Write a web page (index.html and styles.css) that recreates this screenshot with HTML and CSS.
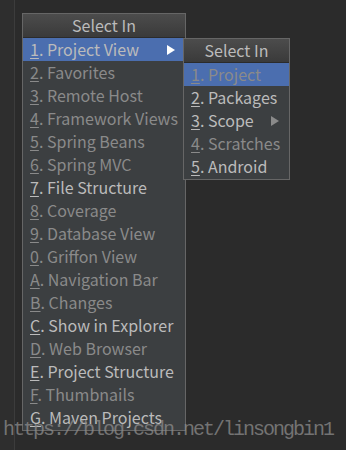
FILE: index.html
```html
<!DOCTYPE html>
<html lang="en">
<head>
    <meta charset="UTF-8">
    <meta name="viewport" content="width=device-width, initial-scale=1.0">
    <title>Select In</title>
    <link rel="stylesheet" href="styles.css">
</head>
<body>
    <div class="gutter"></div>
    <div class="editor">
        <div class="menu main-menu">
            <div class="menu-title">Select In</div>
            <ul class="menu-list">
                <li class="item active bright"><span><u>1</u>. Project View</span>
                    <svg class="arrow" width="8" height="10" viewBox="0 0 8 10"><polygon points="0,0 8,5 0,10" fill="#ffffff"/></svg>
                </li>
                <li class="item"><span><u>2</u>. Favorites</span></li>
                <li class="item"><span><u>3</u>. Remote Host</span></li>
                <li class="item"><span><u>4</u>. Framework Views</span></li>
                <li class="item"><span><u>5</u>. Spring Beans</span></li>
                <li class="item"><span><u>6</u>. Spring MVC</span></li>
                <li class="item bright"><span><u>7</u>. File Structure</span></li>
                <li class="item"><span><u>8</u>. Coverage</span></li>
                <li class="item"><span><u>9</u>. Database View</span></li>
                <li class="item"><span><u>0</u>. Griffon View</span></li>
                <li class="item"><span><u>A</u>. Navigation Bar</span></li>
                <li class="item"><span><u>B</u>. Changes</span></li>
                <li class="item bright"><span><u>C</u>. Show in Explorer</span></li>
                <li class="item"><span><u>D</u>. Web Browser</span></li>
                <li class="item bright"><span><u>E</u>. Project Structure</span></li>
                <li class="item"><span><u>F</u>. Thumbnails</span></li>
                <li class="item bright"><span><u>G</u>. Maven Projects</span></li>
            </ul>

            <div class="menu sub-menu">
                <div class="menu-title">Select In</div>
                <ul class="menu-list">
                    <li class="item active"><span><u>1</u>. Project</span></li>
                    <li class="item bright"><span><u>2</u>. Packages</span></li>
                    <li class="item bright"><span><u>3</u>. Scope</span>
                        <svg class="arrow" width="8" height="10" viewBox="0 0 8 10"><polygon points="0,0 8,5 0,10" fill="#8a8a8a"/></svg>
                    </li>
                    <li class="item"><span><u>4</u>. Scratches</span></li>
                    <li class="item bright"><span><u>5</u>. Android</span></li>
                </ul>
            </div>
        </div>
    </div>
    <div class="watermark">https://blog.csdn.net/linsongbin1</div>
</body>
</html>
```

FILE: styles.css
```css
* {
    margin: 0;
    padding: 0;
    box-sizing: border-box;
}

body {
    font-family: "Noto Sans CJK SC", "Noto Sans", sans-serif;
    background: #2b2b2b;
    height: 100vh;
    display: flex;
    overflow: hidden;
    position: relative;
}

.gutter {
    width: 15px;
    height: 100%;
    background: #2e2e2e;
    border-right: 1px solid #3c3c3c;
}

.editor {
    flex: 1;
    padding: 13px 0 0 7px;
}

.menu {
    background: #3c3f41;
    border: 1px solid #666666;
}

.main-menu {
    width: 164px;
    position: relative;
}

.sub-menu {
    position: absolute;
    left: 160px;
    top: 24px;
    width: 107px;
}

.menu-title {
    height: 24px;
    line-height: 23px;
    text-align: center;
    font-size: 16px;
    color: #bbbbbb;
    background: linear-gradient(#4c4c4c, #3a3a3a);
    border-bottom: 1px solid #2b2b2b;
}

.menu-list {
    list-style: none;
    padding-bottom: 1px;
}

.item {
    height: 23px;
    line-height: 23px;
    padding: 0 10px 0 7px;
    font-size: 16px;
    color: #8a8a8a;
    display: flex;
    align-items: center;
    justify-content: space-between;
    white-space: nowrap;
}

.item.bright {
    color: #bbbbbb;
}

.item.active {
    background: #4b6eaf;
}

.item u {
    text-underline-offset: 2px;
}

.watermark {
    position: absolute;
    left: 3px;
    top: 418px;
    font-family: "Liberation Mono", monospace;
    font-size: 20px;
    letter-spacing: -2px;
    color: rgba(140, 140, 140, 0.75);
    white-space: nowrap;
}
```
